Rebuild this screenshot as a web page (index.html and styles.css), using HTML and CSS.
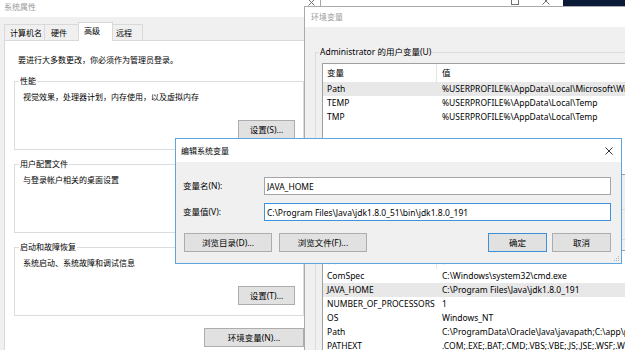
FILE: index.html
```html
<!DOCTYPE html>
<html>
<head>
    <meta charset="utf-8">
    <title>编辑系统变量</title>
    <link rel="stylesheet" href="styles.css">
</head>
<body>
    <div class="desktop">
        <!-- window behind the others, only the bottom of its caption buttons shows -->
        <div class="window back-window">
            <div class="caption">
                <svg class="caption-glyph" width="8" height="8" viewBox="0 0 8 8"><rect x="0.5" y="0.5" width="7" height="7" fill="none" stroke="#707070"/></svg>
                <svg class="caption-glyph" width="8" height="8" viewBox="0 0 8 8"><path d="M0.5 0.5l7 7M7.5 0.5l-7 7" stroke="#707070"/></svg>
            </div>
        </div>

        <div class="window sys-window">
            <div class="caption">
                <span class="caption-title inactive">系统属性</span>
                <svg class="sys-close" width="7" height="7" viewBox="0 0 7 7"><path d="M0.5 0.5l6 6M6.5 0.5l-6 6" stroke="#707070"/></svg>
            </div>
            <div class="tabs">
                <span class="tab tab-name">计算机名</span>
                <span class="tab tab-hardware">硬件</span>
                <span class="tab tab-advanced selected">高级</span>
                <span class="tab tab-remote">远程</span>
            </div>
            <div class="tab-panel">
                <p class="notice">要进行大多数更改，你必须作为管理员登录。</p>
                <fieldset class="group">
                    <legend>性能</legend>
                    <p class="group-text">视觉效果，处理器计划，内存使用，以及虚拟内存</p>
                    <div class="group-actions"><button class="btn btn-settings">设置(S)...</button></div>
                </fieldset>
                <fieldset class="group">
                    <legend>用户配置文件</legend>
                    <p class="group-text">与登录帐户相关的桌面设置</p>
                    <div class="group-actions"><button class="btn btn-settings">设置(E)...</button></div>
                </fieldset>
                <fieldset class="group">
                    <legend>启动和故障恢复</legend>
                    <p class="group-text">系统启动、系统故障和调试信息</p>
                    <div class="group-actions"><button class="btn btn-settings">设置(T)...</button></div>
                </fieldset>
                <div class="panel-actions"><button class="btn btn-env">环境变量(N)...</button></div>
            </div>
        </div>

        <div class="window env-window">
            <div class="caption">
                <span class="caption-title inactive">环境变量</span>
            </div>
            <div class="env-body">
                <fieldset class="env-group user-group">
                    <legend>Administrator 的用户变量(U)</legend>
                    <div class="var-list user-list">
                        <div class="var-row var-head"><span>变量</span><span>值</span></div>
                        <div class="var-row picked"><span>Path</span><span>%USERPROFILE%\AppData\Local\Microsoft\WindowsApps;</span></div>
                        <div class="var-row"><span>TEMP</span><span>%USERPROFILE%\AppData\Local\Temp</span></div>
                        <div class="var-row"><span>TMP</span><span>%USERPROFILE%\AppData\Local\Temp</span></div>
                    </div>
                </fieldset>
                <fieldset class="env-group system-group">
                    <legend>系统变量(S)</legend>
                    <div class="var-list system-list">
                        <div class="var-row var-head"><span>变量</span><span>值</span></div>
                        <div class="var-row"><span>ComSpec</span><span>C:\Windows\system32\cmd.exe</span></div>
                        <div class="var-row picked"><span>JAVA_HOME</span><span>C:\Program Files\Java\jdk1.8.0_191</span></div>
                        <div class="var-row"><span>NUMBER_OF_PROCESSORS</span><span>1</span></div>
                        <div class="var-row"><span>OS</span><span>Windows_NT</span></div>
                        <div class="var-row"><span>Path</span><span>C:\ProgramData\Oracle\Java\javapath;C:\app\product</span></div>
                        <div class="var-row"><span>PATHEXT</span><span>.COM;.EXE;.BAT;.CMD;.VBS;.VBE;.JS;.JSE;.WSF;.WSH;.MSC</span></div>
                    </div>
                </fieldset>
            </div>
        </div>

        <div class="window edit-dialog">
            <div class="caption">
                <span class="caption-title">编辑系统变量</span>
                <svg class="dialog-close" width="8" height="8" viewBox="0 0 8 8"><path d="M0.5 0.5l7 7M7.5 0.5l-7 7" stroke="#333333"/></svg>
            </div>
            <div class="dialog-body">
                <div class="field-grid">
                    <label for="var-name">变量名(N):</label>
                    <input id="var-name" class="field" type="text" value="JAVA_HOME">
                    <label for="var-value">变量值(V):</label>
                    <input id="var-value" class="field focused" type="text" value="C:\Program Files\Java\jdk1.8.0_51\bin\jdk1.8.0_191">
                </div>
                <div class="dialog-actions">
                    <button class="btn btn-browse">浏览目录(D)...</button>
                    <button class="btn btn-browse">浏览文件(F)...</button>
                    <button class="btn btn-dialog btn-default">确定</button>
                    <button class="btn btn-dialog">取消</button>
                </div>
            </div>
            <svg class="grip" width="6" height="6" viewBox="0 0 6 6" fill="#b4b4b4">
                <rect x="4" y="0" width="1" height="1"/>
                <rect x="2" y="2" width="1" height="1"/><rect x="4" y="2" width="1" height="1"/>
                <rect x="0" y="4" width="1" height="1"/><rect x="2" y="4" width="1" height="1"/><rect x="4" y="4" width="1" height="1"/>
            </svg>
        </div>
    </div>
</body>
</html>
```

FILE: styles.css
```css
* {
    box-sizing: border-box;
}

body {
    margin: 0;
    font-family: "Noto Sans", "Noto Sans CJK SC", sans-serif;
    font-size: 8.5px;
    line-height: 12px;
    color: #000000;
}

.desktop {
    position: relative;
    width: 625px;
    height: 350px;
    overflow: hidden;
    background-color: #0b1a36;
}

/* windows sit on the desktop at their own places */
.window {
    position: absolute;
    overflow: hidden;
    background-color: #f0f0f0;
}

.caption {
    display: flex;
    align-items: center;
    background-color: #ffffff;
}

/* chinese-only labels run a touch smaller than the latin text */
.caption-title,
.tab,
.notice,
.group-text,
.group legend {
    font-size: 8px;
}

.caption-title.inactive {
    color: #9a9a9a;
}

/* the window behind everything */
.back-window {
    left: 320px;
    top: -14px;
    width: 243px;
    height: 20px;
    background-color: #ffffff;
}

.back-window .caption {
    justify-content: flex-end;
    align-items: flex-end;
    height: 20px;
    padding: 0 13px 1px 0;
    gap: 23px;
}

/* system properties */
.sys-window {
    left: -1px;
    top: -3px;
    width: 322px;
    height: 360px;
    border-right: 1px solid #aaaaaa;
}

.sys-window .caption {
    height: 20px;
    padding-left: 5px;
}

.sys-close {
    align-self: flex-start;
    margin: 2px 5px 0 auto;
}

.tabs {
    position: relative;
    z-index: 1;
    display: flex;
    align-items: flex-end;
    height: 18px;
    margin-top: 5px;
    padding-left: 5px;
}

.tab {
    height: 16px;
    line-height: 15px;
    padding-left: 5px;
    margin-right: -1px;
    border: 1px solid #d9d9d9;
    border-bottom: none;
    background-color: #f0f0f0;
}

.tab-name { width: 41px; }
.tab-hardware { width: 35px; padding-left: 6px; }
.tab-advanced { width: 35px; }
.tab-remote { width: 31px; padding-left: 3px; }

.tab.selected {
    height: 19px;
    margin-bottom: -1px;
    background-color: #ffffff;
}

.tab-panel {
    width: 312px;
    height: 320px;
    margin-left: 5px;
    padding: 13px 0 0 9px;
    background-color: #ffffff;
    border: 1px solid #d9d9d9;
}

.notice {
    margin: 0 0 9px 4px;
}

.group {
    width: 290px;
    min-width: 0;
    margin: 0;
    padding: 0 8px 10px 8px;
    border: 1px solid #dcdcdc;
}

.group + .group {
    margin-top: 8px;
}

legend {
    padding: 0 1px;
    margin-left: -4px;
    line-height: 12px;
}

.group-text {
    margin: 4px 0 0 0;
}

.group-actions {
    display: flex;
    justify-content: flex-end;
    margin-top: 17px;
}

.panel-actions {
    display: flex;
    justify-content: flex-end;
    width: 290px;
    margin-top: 12px;
}

.btn {
    height: 19px;
    padding: 0;
    font-family: inherit;
    font-size: inherit;
    line-height: 17px;
    color: #000000;
    background-color: #e1e1e1;
    border: 1px solid #adadad;
}

.btn-settings { width: 57px; }
.btn-env { width: 100px; }

/* environment variables */
.env-window {
    left: 304px;
    top: 6px;
    width: 340px;
    height: 360px;
    border: 1px solid #aaaaaa;
}

.env-window .caption {
    height: 20px;
    padding-left: 6px;
}

.env-body {
    padding: 19px 0 0 10px;
}

.env-group {
    width: 330px;
    min-width: 0;
    margin: 0;
    padding: 0 6px 34px 6px;
    border: 1px solid #dcdcdc;
}

.env-group legend {
    margin-left: -3px;
}

.system-group {
    margin-top: 23px;
}

.var-list {
    width: 320px;
    margin-top: 5px;
    overflow: hidden;
    white-space: nowrap;
    background-color: #ffffff;
    border: 1px solid #a0a0a0;
}

.user-list {
    height: 112px;
}

.var-row {
    display: grid;
    grid-template-columns: 114px 1fr;
    height: 14px;
    line-height: 14px;
}

.var-row span {
    padding-left: 4px;
    overflow: hidden;
}

.var-row span + span {
    padding-left: 5px;
}

.var-head {
    height: 18px;
    line-height: 18px;
}

.var-head span {
    border-right: 1px solid #e5e5e5;
}

.var-row.picked {
    background-color: #e8e8e8;
}

/* edit system variable dialog */
.edit-dialog {
    left: 175px;
    top: 138px;
    width: 447px;
    height: 126px;
    border: 1px solid #5ea5dd;
}

.edit-dialog .caption {
    height: 23px;
    padding-left: 5px;
}

.dialog-close {
    margin: 0 8px 0 auto;
}

.dialog-body {
    padding: 15px 10px 11px 8px;
}

.field-grid {
    display: grid;
    grid-template-columns: 81px 347px;
    grid-auto-rows: 18px;
    row-gap: 8px;
    margin-left: -1px;
}

.field-grid label {
    line-height: 18px;
}

.field {
    height: 18px;
    padding: 0 2px;
    font-family: inherit;
    font-size: inherit;
    color: #000000;
    background-color: #ffffff;
    border: 1px solid #a5a5a5;
    outline: none;
}

.field.focused {
    border-color: #3d93dc;
}

.dialog-actions {
    display: flex;
    gap: 7px;
    margin-top: 12px;
}

.btn-browse { width: 88px; }
.btn-dialog { width: 59px; }

.btn-default {
    margin-left: auto;
    border-color: #3d8fd8;
}

.btn-default + .btn-dialog {
    margin-left: -2px;
}

.grip {
    position: absolute;
    right: 1px;
    bottom: 1px;
}
```
